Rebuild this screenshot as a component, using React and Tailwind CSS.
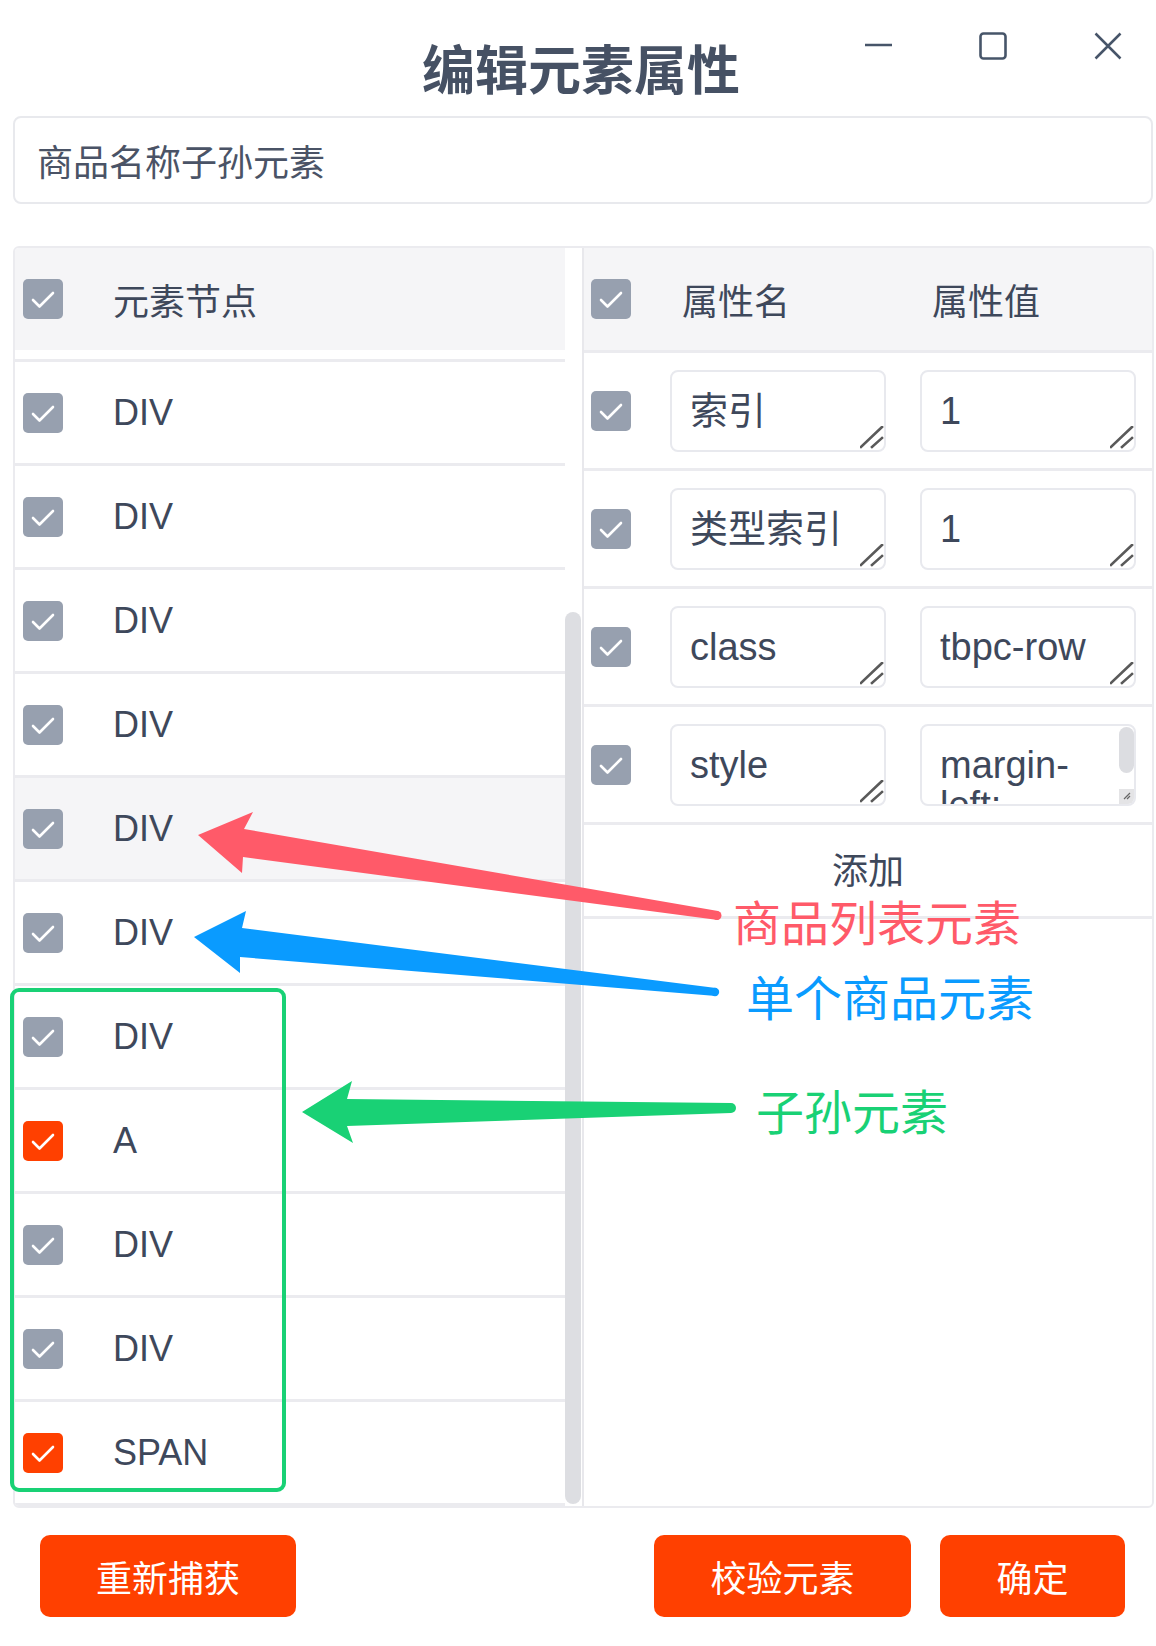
import React from 'react';

const nodes = [
  { tag: 'DIV' }, { tag: 'DIV' }, { tag: 'DIV' }, { tag: 'DIV' },
  { tag: 'DIV', hover: true }, { tag: 'DIV' }, { tag: 'DIV' },
  { tag: 'A', red: true }, { tag: 'DIV' }, { tag: 'DIV' }, { tag: 'SPAN', red: true },
];

const attrs = [
  { name: '索引', value: '1' },
  { name: '类型索引', value: '1' },
  { name: 'class', value: 'tbpc-row' },
  { name: 'style', value: 'margin-\nleft:', scroll: true },
];

function Check({ red }) {
  return (
    <div className={`w-[40px] h-[40px] shrink-0 rounded-[5px] ${red ? 'bg-[#ff4000]' : 'bg-[#97a0af]'}`}>
      <svg width="40" height="40" viewBox="0 0 40 40">
        <path d="M10 21 L16.5 27.5 L30 14" stroke="#fff" strokeWidth="2.6" fill="none" strokeLinecap="round" strokeLinejoin="round" />
      </svg>
    </div>
  );
}

function ResizeHandle() {
  return (
    <svg className="absolute right-0 bottom-0" width="24" height="24" viewBox="0 0 24 24">
      <path d="M1 21 L22 1 M12 21 L22 12" stroke="#5a5a5a" strokeWidth="2.6" strokeLinecap="square" />
    </svg>
  );
}

function Field({ text, scroll }) {
  return (
    <div className="relative w-[216px] h-[82px] shrink-0 border-2 border-[#e8e9ee] rounded-[8px] pl-[18px] pt-[19px] pr-[18px] text-[38px] leading-[40px] overflow-hidden whitespace-pre">
      {text}
      {scroll ? (
        <>
          <div className="absolute right-0 top-[1px] w-[15px] h-[46px] rounded-full bg-[#dcdde1]" />
          <div className="absolute right-0 bottom-0 w-[15px] h-[15px] bg-[#e4e4e6] flex items-center justify-center">
            <svg width="8" height="8" viewBox="0 0 8 8">
              <path d="M1 7 L7 1 M4 7 L7 4" stroke="#666" strokeWidth="1.2" />
            </svg>
          </div>
        </>
      ) : (
        <ResizeHandle />
      )}
    </div>
  );
}

export default function App() {
  return (
    <div className="relative w-[1156px] h-[1646px] bg-white overflow-hidden font-['Liberation_Sans','Noto_Sans_CJK_SC',sans-serif] text-[36px] text-[#3e485b]">
      {/* Title bar */}
      <header className="flex h-[116px]">
        <div className="flex-1 pl-[34px]" />
        <h1 className="mt-[41px] pl-[6px] text-[53px] leading-[53px] font-bold text-[#465164] font-['Noto_Sans_CJK_SC',sans-serif]">编辑元素属性</h1>
        <div className="flex-1 flex justify-end gap-[87px] pt-[32px] pr-[34px] text-[#475569]">
          <svg width="28" height="28" viewBox="0 0 28 28">
            <path d="M1 13 H28" stroke="currentColor" strokeWidth="2.5" />
          </svg>
          <svg width="28" height="28" viewBox="0 0 28 28">
            <rect x="1.5" y="1.5" width="25" height="25" rx="3" stroke="currentColor" strokeWidth="2.6" fill="none" />
          </svg>
          <svg width="28" height="28" viewBox="0 0 28 28">
            <path d="M1.5 1.5 L26.5 26.5 M26.5 1.5 L1.5 26.5" stroke="currentColor" strokeWidth="2.5" />
          </svg>
        </div>
      </header>

      {/* Name input */}
      <div className="ml-[13px] w-[1140px] h-[88px] border-2 border-[#e8e9ed] rounded-[8px] pl-[22px] flex items-center text-[#4a5366] font-['Noto_Sans_CJK_SC',sans-serif]">
        商品名称子孙元素
      </div>

      {/* Main panel */}
      <div className="mt-[42px] ml-[13px] w-[1141px] h-[1262px] border-2 border-[#ebebef] rounded-[6px] flex overflow-hidden">
        {/* Element nodes */}
        <div className="flex border-r-2 border-[#e8e8ec]">
          <div className="w-[550px] flex flex-col">
            <div className="h-[102px] bg-[#f5f5f7] flex items-center pl-[8px]">
              <Check />
              <span className="ml-[50px] font-['Noto_Sans_CJK_SC',sans-serif]">元素节点</span>
            </div>
            <div className="h-[9px]" />
            <div className="border-t-[3px] border-[#ebebef]">
              {nodes.map((n, i) => (
                <div key={i} className={`h-[104px] border-b-[3px] border-[#ebebef] flex items-center pl-[8px] ${n.hover ? 'bg-[#f5f5f7]' : ''}`}>
                  <Check red={n.red} />
                  <span className="ml-[50px]">{n.tag}</span>
                </div>
              ))}
            </div>
          </div>
          <div className="w-[17px] flex flex-col pt-[364px] pb-[2px]">
            <div className="flex-1 w-[16px] rounded-full bg-[#dddee2]" />
          </div>
        </div>

        {/* Attributes */}
        <div className="w-[568px] flex flex-col">
          <div className="h-[105px] bg-[#f5f5f7] border-b-[3px] border-[#ebebef] flex items-center pl-[7px] font-['Noto_Sans_CJK_SC',sans-serif]">
            <Check />
            <span className="ml-[39px] w-[216px] pl-[12px]">属性名</span>
            <span className="ml-[34px] pl-[12px]">属性值</span>
          </div>
          {attrs.map((a, i) => (
            <div key={i} className="h-[118px] border-b-[3px] border-[#ebebef] flex items-center pl-[7px]">
              <Check />
              <div className="ml-[39px]">
                <Field text={a.name} />
              </div>
              <div className="ml-[34px]">
                <Field text={a.value} scroll={a.scroll} />
              </div>
            </div>
          ))}
          <div className="h-[94px] border-b-[3px] border-[#ebebef] flex items-center justify-center pb-[6px] font-['Noto_Sans_CJK_SC',sans-serif]">
            添加
          </div>
        </div>
      </div>

      {/* Footer buttons */}
      <div className="mt-[27px] flex pl-[40px] pr-[31px] text-white font-['Noto_Sans_CJK_SC',sans-serif]">
        <button className="w-[256px] h-[82px] rounded-[10px] bg-[#ff4000]">重新捕获</button>
        <div className="flex-1" />
        <button className="w-[257px] h-[82px] rounded-[10px] bg-[#ff4000]">校验元素</button>
        <button className="ml-[29px] w-[185px] h-[82px] rounded-[10px] bg-[#ff4000]">确定</button>
      </div>

      {/* Annotations */}
      <div className="absolute left-[10px] top-[988px] w-[276px] h-[504px] border-[4px] border-[#19d175] rounded-[9px] pointer-events-none" />
      <svg className="absolute left-0 top-0 pointer-events-none" width="1156" height="1646" viewBox="0 0 1156 1646">
        <path d="M198 835 L253 812 L244 829 L718 911 Q722 915 718 920 L243 857 L242 873 Z" fill="#ff5a69" />
        <circle cx="717" cy="915.5" r="4.5" fill="#ff5a69" />
        <path d="M194 937 L246 911 L242 928 L716 988 Q720 992 716 996 L240 957 L240 973 Z" fill="#0a9bff" />
        <circle cx="715" cy="992" r="4.2" fill="#0a9bff" />
        <path d="M302 1112 L352 1081 L347 1099 L731 1103 L731 1113 L347 1126 L353 1143 Z" fill="#19d175" />
        <circle cx="731" cy="1108" r="5" fill="#19d175" />
      </svg>
      <div className="absolute left-[733px] top-[896px] text-[48px] leading-[48px] text-[#ff5a69] font-['Noto_Sans_CJK_SC',sans-serif] pointer-events-none">商品列表元素</div>
      <div className="absolute left-[746px] top-[971px] text-[48px] leading-[48px] text-[#0a9bff] font-['Noto_Sans_CJK_SC',sans-serif] pointer-events-none">单个商品元素</div>
      <div className="absolute left-[756px] top-[1085px] text-[48px] leading-[48px] text-[#19d175] font-['Noto_Sans_CJK_SC',sans-serif] pointer-events-none">子孙元素</div>
    </div>
  );
}
